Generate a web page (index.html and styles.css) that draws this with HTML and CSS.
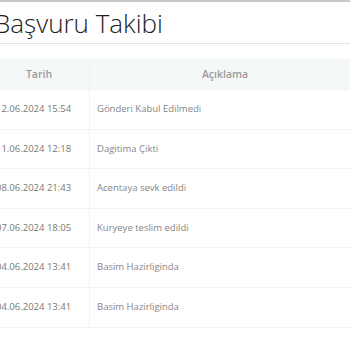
FILE: index.html
```html
<!DOCTYPE html>
<html lang="tr">
<head>
<meta charset="utf-8">
<link rel="stylesheet" href="styles.css">
</head>
<body>
<div class="topline"></div>
<div class="page">
  <h1 class="title">Başvuru Takibi</h1>
  <table class="track">
    <thead>
      <tr><th class="c-date">Tarih</th><th>Açıklama</th></tr>
    </thead>
    <tbody>
      <tr><td class="c-date">12.06.2024 15:54</td><td>Gönderi Kabul Edilmedi</td></tr>
      <tr><td class="c-date">11.06.2024 12:18</td><td>Dagitima Çikti</td></tr>
      <tr><td class="c-date">08.06.2024 21:43</td><td>Acentaya sevk edildi</td></tr>
      <tr><td class="c-date">07.06.2024 18:05</td><td>Kuryeye teslim edildi</td></tr>
      <tr><td class="c-date">04.06.2024 13:41</td><td>Basim Hazirliginda</td></tr>
      <tr><td class="c-date">04.06.2024 13:41</td><td>Basim Hazirliginda</td></tr>
    </tbody>
  </table>
</div>
</body>
</html>
```
FILE: styles.css
```css
html, body {
  margin: 0;
  padding: 0;
  background: #fff;
}
body {
  font-family: "Open Sans", "Liberation Sans", sans-serif;
  overflow: hidden;
}
.topline {
  height: 2px;
  background: #c9c9c9;
}
.page {
  margin-left: -11px;
  width: 372px;
}
.title {
  margin: 0 0 0 5px;
  padding: 4px 0 3px 0;
  font-weight: 300;
  font-size: 26px;
  line-height: 34px;
  color: #222;
  border-bottom: 1px solid #e3e3e3;
}
.track {
  margin-top: 15px;
  width: 100%;
  border-collapse: collapse;
  font-size: 9.5px;
}
.track th {
  background: #f5f8f8;
  color: #999;
  font-weight: 600;
  font-size: 10.5px;
  height: 30px;
  padding: 0 8px;
  text-align: center;
  border-right: 1px solid #eef0f0;
}
.track td {
  padding: 12px 7px;
  line-height: 14.6px;
  color: #777;
  border-top: 1px solid #f2f2f2;
  border-bottom: 1px solid #f2f2f2;
  text-align: left;
}
.track td:first-child {
  border-right: 1px solid #f2f2f2;
}
.track .c-date {
  width: 84px;
}
.track td + td {
  color: #868686;
}
```
